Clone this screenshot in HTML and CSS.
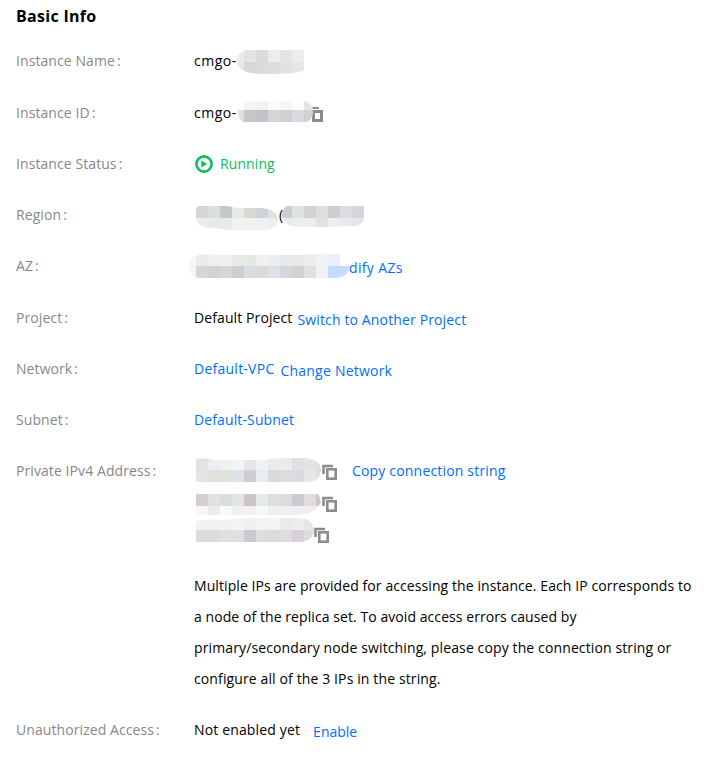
FILE: index.html
```
<!DOCTYPE html>
<html lang="en">
<head>
    <meta charset="UTF-8">
    <meta name="viewport" content="width=device-width, initial-scale=1.0">
    <title>Basic Info</title>
    <link rel="stylesheet" href="styles.css">
</head>
<body>
    <!-- Shared shapes -->
    <svg class="defs" width="0" height="0">
        <symbol id="copy" viewBox="0 0 15 16">
            <path d="M1.5 10V2H11" fill="none" stroke="#8c8c8c" stroke-width="2.6"/>
            <rect x="5.3" y="5.3" width="8.4" height="9.4" fill="#fff" stroke="#8c8c8c" stroke-width="2.6"/>
        </symbol>
    </svg>

    <div class="panel">
        <h2>Basic Info</h2>

        <div class="row">
            <div class="label">Instance Name<span class="colon">:</span></div>
            <div class="value">
                <span class="prefix">cmgo-</span>
                <svg class="mask" width="68" height="31">
                    <clipPath id="m1"><path d="M12 4H68V25Q56 28 42 28H22Q1 26 1 16Q1 5 12 4z"/></clipPath>
                    <g clip-path="url(#m1)">
                        <rect x="0" y="4" width="8" height="12" fill="#ebeaea"/>
                        <rect x="8" y="4" width="12" height="12" fill="#e4e3e2"/>
                        <rect x="20" y="4" width="12" height="12" fill="#dbdbdb"/>
                        <rect x="32" y="4" width="12" height="12" fill="#ebecee"/>
                        <rect x="44" y="4" width="12" height="12" fill="#e4e4e4"/>
                        <rect x="56" y="4" width="12" height="12" fill="#ebecee"/>
                        <rect x="0" y="16" width="8" height="12" fill="#e8e8e8"/>
                        <rect x="8" y="16" width="12" height="12" fill="#d6d7d9"/>
                        <rect x="20" y="16" width="12" height="12" fill="#dadbdd"/>
                        <rect x="32" y="16" width="12" height="12" fill="#dcdddf"/>
                        <rect x="44" y="16" width="12" height="12" fill="#e0e2e3"/>
                        <rect x="56" y="16" width="12" height="12" fill="#e5e7e7"/>
                    </g>
                </svg>
            </div>
        </div>

        <div class="row">
            <div class="label">Instance ID<span class="colon">:</span></div>
            <div class="value">
                <span class="prefix">cmgo-</span>
                <svg class="mask" width="88" height="31">
                    <path d="M75 10H83" stroke="#8c8c8c" stroke-width="2"/>
                    <path d="M76 12H87V24H76zM79 15V21H84V15z" fill="#8c8c8c" fill-rule="evenodd"/>
                    <clipPath id="m2"><path d="M8 5Q20 3 36 3H68Q77 4 77 14Q77 22 70 24H8Q2 22 2 12H8z"/></clipPath>
                    <g clip-path="url(#m2)">
                        <rect x="8" y="0" width="12" height="12" fill="#f5f5f4"/>
                        <rect x="20" y="0" width="12" height="12" fill="#f3f2f1"/>
                        <rect x="32" y="0" width="12" height="12" fill="#fbfbfb"/>
                        <rect x="44" y="0" width="12" height="12" fill="#f5f6f8"/>
                        <rect x="56" y="0" width="12" height="12" fill="#fdfdfd"/>
                        <rect x="68" y="0" width="12" height="12" fill="#e6e6e7"/>
                        <rect x="0" y="12" width="8" height="12" fill="#dddddb"/>
                        <rect x="8" y="12" width="12" height="12" fill="#c6c6ca"/>
                        <rect x="20" y="12" width="12" height="12" fill="#c3c3c7"/>
                        <rect x="32" y="12" width="12" height="12" fill="#d3d5d8"/>
                        <rect x="44" y="12" width="12" height="12" fill="#d0d0cf"/>
                        <rect x="56" y="12" width="12" height="12" fill="#d6dade"/>
                        <rect x="68" y="12" width="12" height="12" fill="#d2d2d1"/>
                    </g>
                </svg>
            </div>
        </div>

        <div class="row">
            <div class="label">Instance Status<span class="colon">:</span></div>
            <div class="value running">
                <svg class="status-icon" width="18" height="18" viewBox="0 0 18 18">
                    <circle cx="9" cy="9" r="7.6" fill="none" stroke="#0abf5b" stroke-width="2.6"/>
                    <path d="M6.4 5.6L12.2 9L6.4 12.4z" fill="#0abf5b"/>
                </svg>
                <span class="t-running">Running</span>
            </div>
        </div>

        <div class="row">
            <div class="label">Region<span class="colon">:</span></div>
            <div class="value">
                <svg class="mask" width="84" height="31">
                    <clipPath id="m3"><path d="M5 6H34Q40 8 48 8H68Q84 10 84 20Q84 30 68 30H32Q24 28 16 28Q2 27 2 17V10Q2 7 5 6z"/></clipPath>
                    <g clip-path="url(#m3)">
                        <rect x="0" y="6" width="14" height="12" fill="#d4d5d7"/>
                        <rect x="14" y="6" width="12" height="12" fill="#d8dfdd"/>
                        <rect x="26" y="6" width="12" height="12" fill="#c3c9cb"/>
                        <rect x="38" y="6" width="12" height="12" fill="#e8eae9"/>
                        <rect x="50" y="6" width="12" height="12" fill="#d9d7d1"/>
                        <rect x="62" y="6" width="12" height="12" fill="#ced3d8"/>
                        <rect x="74" y="6" width="12" height="12" fill="#e2e0dc"/>
                        <rect x="0" y="18" width="14" height="12" fill="#ebebe9"/>
                        <rect x="14" y="18" width="12" height="12" fill="#e8eaea"/>
                        <rect x="26" y="18" width="12" height="12" fill="#e9eaeb"/>
                        <rect x="38" y="18" width="24" height="12" fill="#f2f3f1"/>
                        <rect x="62" y="18" width="12" height="12" fill="#eff1f5"/>
                        <rect x="74" y="18" width="12" height="12" fill="#eeeeec"/>
                    </g>
                </svg>
                <span class="paren">(</span>
                <svg class="mask region-end" width="82" height="31">
                    <clipPath id="m4"><path d="M5 6H82V18Q80 26 72 26Q60 26 50 27H16Q2 26 0 16Q0 8 5 6z"/></clipPath>
                    <g clip-path="url(#m4)">
                        <rect x="0" y="6" width="10" height="12" fill="#ccccd2"/>
                        <rect x="10" y="6" width="12" height="12" fill="#dde3df"/>
                        <rect x="22" y="6" width="12" height="12" fill="#d3d4cf"/>
                        <rect x="34" y="6" width="12" height="12" fill="#dadfdf"/>
                        <rect x="46" y="6" width="12" height="12" fill="#cecdd1"/>
                        <rect x="58" y="6" width="12" height="12" fill="#dbdce1"/>
                        <rect x="70" y="6" width="12" height="12" fill="#d6d5dd"/>
                        <rect x="0" y="18" width="10" height="12" fill="#e8ebea"/>
                        <rect x="10" y="18" width="12" height="12" fill="#ebefec"/>
                        <rect x="22" y="18" width="12" height="12" fill="#ededed"/>
                        <rect x="34" y="18" width="12" height="12" fill="#e0e1e0"/>
                        <rect x="46" y="18" width="12" height="12" fill="#ededee"/>
                        <rect x="58" y="18" width="12" height="12" fill="#e8e9ec"/>
                        <rect x="70" y="18" width="12" height="12" fill="#e5e5e8"/>
                    </g>
                </svg>
            </div>
        </div>

        <div class="row">
            <div class="label">AZ<span class="colon">:</span></div>
            <div class="value">
                <svg class="mask az" width="162" height="31">
                    <clipPath id="m5"><path d="M12 4Q18 3 30 4H115Q122 3 130 3H152V15H162Q160 27 146 27H12Q1 26 1 16Q1 5 12 4z"/></clipPath>
                    <g clip-path="url(#m5)">
                        <rect x="0" y="3" width="8" height="24" fill="#f6f5f4"/>
                        <rect x="8" y="3" width="12" height="12" fill="#e9ebef"/>
                        <rect x="20" y="3" width="24" height="12" fill="#f0f0f0"/>
                        <rect x="44" y="3" width="12" height="12" fill="#e7e8e8"/>
                        <rect x="56" y="3" width="12" height="12" fill="#e5e8e5"/>
                        <rect x="68" y="3" width="12" height="12" fill="#f0f0ef"/>
                        <rect x="80" y="3" width="12" height="12" fill="#ededef"/>
                        <rect x="92" y="3" width="24" height="12" fill="#e7e9e8"/>
                        <rect x="116" y="3" width="12" height="12" fill="#ececeb"/>
                        <rect x="128" y="3" width="12" height="12" fill="#f1f2f4"/>
                        <rect x="140" y="3" width="12" height="12" fill="#e8f0ff"/>
                        <rect x="8" y="15" width="12" height="12" fill="#d8d5d9"/>
                        <rect x="20" y="15" width="12" height="12" fill="#d4d2d5"/>
                        <rect x="32" y="15" width="12" height="12" fill="#d5d6d5"/>
                        <rect x="44" y="15" width="12" height="12" fill="#cfcfce"/>
                        <rect x="56" y="15" width="12" height="12" fill="#d9dce0"/>
                        <rect x="68" y="15" width="12" height="12" fill="#dbdad8"/>
                        <rect x="80" y="15" width="12" height="12" fill="#dde2e6"/>
                        <rect x="92" y="15" width="12" height="12" fill="#d5d6db"/>
                        <rect x="104" y="15" width="12" height="12" fill="#d2d1d5"/>
                        <rect x="116" y="15" width="12" height="12" fill="#e0e0e0"/>
                        <rect x="128" y="15" width="12" height="12" fill="#f3f1f7"/>
                        <rect x="140" y="15" width="22" height="12" fill="#c8dbff"/>
                    </g>
                </svg>
                <a href="#" class="action t-az">dify AZs</a>
            </div>
        </div>

        <div class="row">
            <div class="label">Project<span class="colon">:</span></div>
            <div class="value">
                <span class="t-project">Default Project</span>
                <a href="#" class="action t-switch">Switch to Another Project</a>
            </div>
        </div>

        <div class="row">
            <div class="label">Network<span class="colon">:</span></div>
            <div class="value">
                <a href="#" class="t-vpc">Default-VPC</a>
                <a href="#" class="action t-change">Change Network</a>
            </div>
        </div>

        <div class="row">
            <div class="label">Subnet<span class="colon">:</span></div>
            <div class="value"><a href="#" class="t-subnet">Default-Subnet</a></div>
        </div>

        <div class="row">
            <div class="label">Private IPv4 Address<span class="colon">:</span></div>
            <div class="addresses">
                <div class="value">
                    <svg class="mask ip" width="127" height="31">
                        <clipPath id="m6"><path d="M2 3Q12 1 22 4H70Q78 2 90 2H112Q127 4 127 14Q127 24 116 26H2z"/></clipPath>
                        <g clip-path="url(#m6)">
                            <rect x="2" y="2" width="12" height="12" fill="#e5e2e4"/>
                            <rect x="14" y="2" width="12" height="12" fill="#ecedf1"/>
                            <rect x="26" y="2" width="12" height="12" fill="#f0f1ee"/>
                            <rect x="38" y="2" width="12" height="12" fill="#f2f5f4"/>
                            <rect x="50" y="2" width="12" height="12" fill="#e7e5ea"/>
                            <rect x="62" y="2" width="12" height="12" fill="#eff1f3"/>
                            <rect x="74" y="2" width="24" height="12" fill="#ebebeb"/>
                            <rect x="98" y="2" width="12" height="12" fill="#dfe0e4"/>
                            <rect x="110" y="2" width="12" height="12" fill="#e4e4e7"/>
                            <rect x="122" y="2" width="6" height="24" fill="#dce0e1"/>
                            <rect x="2" y="14" width="12" height="12" fill="#e6e3e5"/>
                            <rect x="14" y="14" width="12" height="12" fill="#e0e0dd"/>
                            <rect x="26" y="14" width="12" height="12" fill="#dfe3de"/>
                            <rect x="38" y="14" width="12" height="12" fill="#dfe3e5"/>
                            <rect x="50" y="14" width="12" height="12" fill="#d0ccd0"/>
                            <rect x="62" y="14" width="12" height="12" fill="#e8edef"/>
                            <rect x="74" y="14" width="12" height="12" fill="#d6dad8"/>
                            <rect x="86" y="14" width="12" height="12" fill="#dddcda"/>
                            <rect x="98" y="14" width="12" height="12" fill="#dadbdf"/>
                            <rect x="110" y="14" width="12" height="12" fill="#ebe6e5"/>
                        </g>
                    </svg>
                    <svg class="copy" width="15" height="16"><use href="#copy"/></svg>
                    <a href="#" class="t-copy">Copy connection string</a>
                </div>
                <div class="value">
                    <svg class="mask ip" width="127" height="31">
                        <clipPath id="m7"><path d="M2 6H124Q128 12 126 16Q122 24 112 26Q100 28 80 27H2z"/></clipPath>
                        <g clip-path="url(#m7)">
                            <rect x="2" y="6" width="12" height="12" fill="#d4ced2"/>
                            <rect x="14" y="6" width="12" height="12" fill="#dee2e5"/>
                            <rect x="26" y="6" width="12" height="12" fill="#dadeda"/>
                            <rect x="38" y="6" width="12" height="12" fill="#e3e5e4"/>
                            <rect x="50" y="6" width="12" height="12" fill="#ccc6cc"/>
                            <rect x="62" y="6" width="12" height="12" fill="#e2eaea"/>
                            <rect x="74" y="6" width="12" height="12" fill="#dfdfdf"/>
                            <rect x="86" y="6" width="12" height="12" fill="#dfdadb"/>
                            <rect x="98" y="6" width="12" height="12" fill="#c8ccd3"/>
                            <rect x="110" y="6" width="12" height="12" fill="#e4dcdc"/>
                            <rect x="122" y="6" width="5" height="12" fill="#c8c9cb"/>
                            <rect x="2" y="18" width="12" height="12" fill="#f6f6f5"/>
                            <rect x="14" y="18" width="12" height="12" fill="#eeeceb"/>
                            <rect x="26" y="18" width="12" height="12" fill="#f8fbfa"/>
                            <rect x="38" y="18" width="24" height="12" fill="#f1f1f1"/>
                            <rect x="62" y="18" width="12" height="12" fill="#f6f8f8"/>
                            <rect x="74" y="18" width="52" height="12" fill="#efefef"/>
                        </g>
                    </svg>
                    <svg class="copy" width="15" height="16"><use href="#copy"/></svg>
                </div>
                <div class="value">
                    <svg class="mask ip" width="119" height="31">
                        <clipPath id="m8"><path d="M2 2Q14 0 30 1Q44 -1 58 -1H104Q118 -1 120 10Q120 21 108 23H2z"/></clipPath>
                        <g clip-path="url(#m8)">
                            <rect x="2" y="-1" width="36" height="12" fill="#f1f1f0"/>
                            <rect x="38" y="-1" width="12" height="12" fill="#f4f4f4"/>
                            <rect x="50" y="-1" width="12" height="12" fill="#eff0f3"/>
                            <rect x="62" y="-1" width="24" height="12" fill="#f3f3f3"/>
                            <rect x="86" y="-1" width="12" height="12" fill="#e9eae9"/>
                            <rect x="98" y="-1" width="12" height="12" fill="#eeeeee"/>
                            <rect x="110" y="-1" width="12" height="12" fill="#e4e6e5"/>
                            <rect x="2" y="11" width="12" height="12" fill="#dfd9e0"/>
                            <rect x="14" y="11" width="12" height="12" fill="#dadddc"/>
                            <rect x="26" y="11" width="12" height="12" fill="#dee2df"/>
                            <rect x="38" y="11" width="12" height="12" fill="#dfdfe0"/>
                            <rect x="50" y="11" width="12" height="12" fill="#cdc8cd"/>
                            <rect x="62" y="11" width="12" height="12" fill="#dcdedd"/>
                            <rect x="74" y="11" width="12" height="12" fill="#dadcd9"/>
                            <rect x="86" y="11" width="12" height="12" fill="#dededf"/>
                            <rect x="98" y="11" width="12" height="12" fill="#d7d0da"/>
                            <rect x="110" y="11" width="12" height="12" fill="#dcdcdc"/>
                        </g>
                    </svg>
                    <svg class="copy" width="15" height="16"><use href="#copy"/></svg>
                </div>
                <p class="note">
                    <span class="n1">Multiple IPs are provided for accessing the instance. Each IP corresponds to</span><br>
                    <span class="n2">a node of the replica set. To avoid access errors caused by</span><br>
                    <span class="n3">primary/secondary node switching, please copy the connection string or</span><br>
                    <span class="n4">configure all of the 3 IPs in the string.</span>
                </p>
            </div>
        </div>

        <div class="row last">
            <div class="label">Unauthorized Access<span class="colon">:</span></div>
            <div class="value">
                <span class="t-enabled">Not enabled yet</span>
                <a href="#" class="action t-enable">Enable</a>
            </div>
        </div>
    </div>
</body>
</html>
```

FILE: styles.css
```
* {
    margin: 0;
    padding: 0;
    box-sizing: border-box;
}

body {
    background-color: #fff;
    color: #000;
    font-family: "Open Sans", "Noto Sans", sans-serif;
    font-size: 14px;
    line-height: 31.25px;
}

.defs {
    display: block;
}

.panel {
    padding: 0 16px;
}

h2 {
    height: 46.4px;
    font-size: 16px;
    font-weight: bold;
    letter-spacing: 0.3px;
    line-height: 33px;
}

.row {
    display: flex;
    padding-bottom: 20px;
}

.label {
    width: 178px;
    flex-shrink: 0;
    color: #888;
    letter-spacing: 0.08px;
    line-height: 30.2px;
}

.colon {
    margin-left: 2px;
}

.value {
    display: flex;
    height: 31.25px;
    line-height: 30.2px;
    white-space: nowrap;
}

a {
    color: #006eff;
    text-decoration: none;
}

.action {
    padding-top: 2px;
}

.mask {
    flex-shrink: 0;
    overflow: visible;
    shape-rendering: crispEdges;
}

.prefix {
    width: 42px;
    letter-spacing: 0.5px;
}

.running {
    color: #0abf5b;
}

.status-icon {
    margin: 6px 7px 0 1px;
}

.t-running,
.t-project {
    letter-spacing: 0.1px;
}

.paren {
    width: 3px;
    margin-left: 1px;
}

.az {
    margin-left: -6px;
}

.t-az {
    margin-left: -1px;
    letter-spacing: 0.35px;
}

.t-switch,
.t-change {
    margin-left: 5px;
    letter-spacing: 0.14px;
}

.t-change {
    margin-left: 6px;
    letter-spacing: 0.22px;
}

.t-vpc {
    letter-spacing: 0.25px;
}

.t-subnet {
    letter-spacing: 0.12px;
}

.t-copy {
    margin-left: -1px;
    letter-spacing: 0.18px;
}

.t-enabled {
    letter-spacing: 0.15px;
}

.t-enable {
    margin-left: 13px;
}

.copy {
    margin: 8px 16px 0 1px;
}

.note {
    margin-top: 19.5px;
    margin-bottom: 0.5px;
    white-space: nowrap;
}

.n1 {
    letter-spacing: 0.085px;
}

.n2 {
    letter-spacing: 0.07px;
}

.n3,
.n4 {
    letter-spacing: 0.12px;
}
```
